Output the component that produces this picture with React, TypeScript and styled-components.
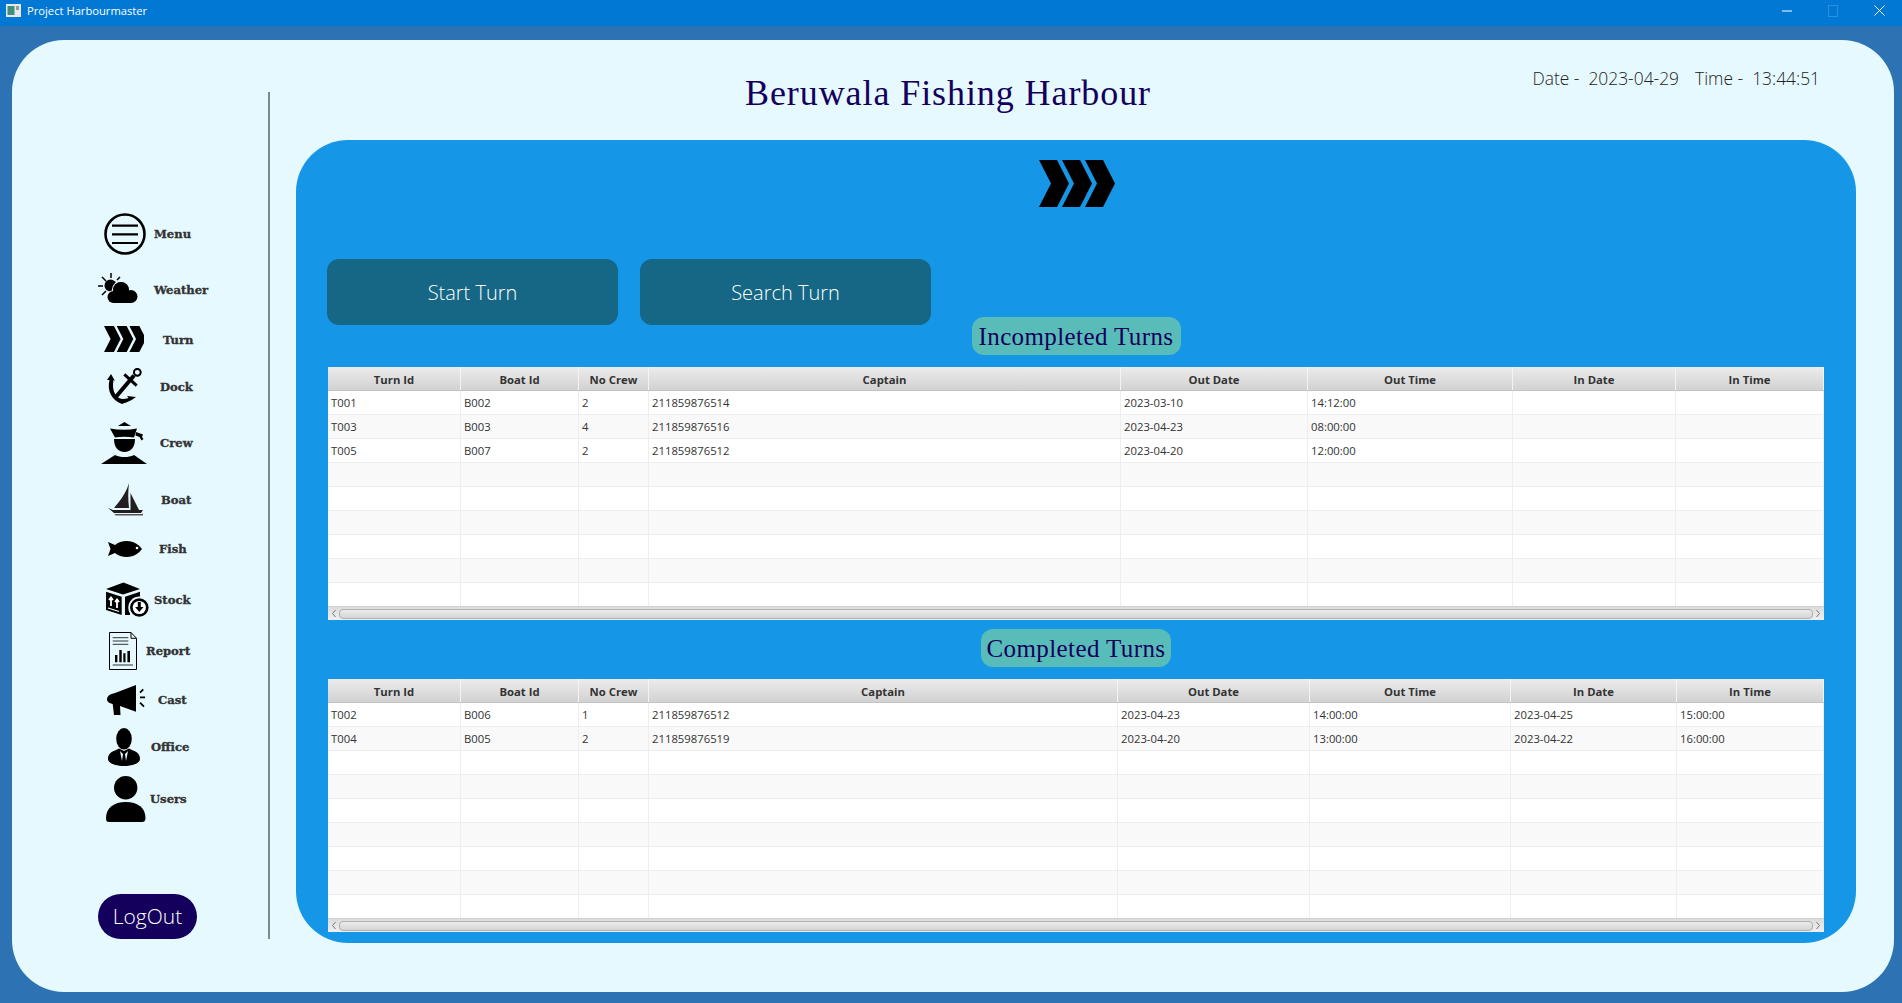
import React, { FC } from 'react';
import styled, { createGlobalStyle } from 'styled-components';

const GlobalStyle = createGlobalStyle`
  html, body {
    margin: 0;
    padding: 0;
    overflow: hidden;
    background: #2d72b2;
  }
  * {
    box-sizing: border-box;
  }
`;

const Window = styled.div`
  width: 1902px;
  height: 1003px;
  display: flex;
  flex-direction: column;
  background: #2d72b2;
  font-family: 'Open Sans', 'Liberation Sans', sans-serif;
`;

const TitleBar = styled.div`
  height: 26px;
  flex: none;
  display: flex;
  align-items: center;
  padding: 0 0 5px 6px;
  background: #0078d4;
  color: #fff;
  font-size: 11.2px;
`;

const AppIcon = styled.svg`
  width: 15px;
  height: 13px;
  margin-right: 6px;
`;

const WindowButtons = styled.div`
  margin-left: auto;
  display: flex;
`;

const WindowButton = styled.div`
  width: 46px;
  height: 20px;
  display: flex;
  align-items: center;
  justify-content: center;
`;

const Card = styled.div`
  flex: 1;
  margin: 14px 8px 11px 12px;
  display: flex;
  background: #e6f9ff;
  border-radius: 52px;
`;

const Sidebar = styled.aside`
  width: 258px;
  flex: none;
  height: 847px;
  margin: 52px 1px 0 0;
  padding-top: 121px;
  display: flex;
  flex-direction: column;
  border-right: 2px solid #7d8a8a;
`;

const NavItem = styled.div<{ $top: number; $left: number; $gap: number }>`
  display: flex;
  align-items: center;
  margin-top: ${(p) => p.$top}px;
  padding-left: ${(p) => p.$left}px;
  gap: ${(p) => p.$gap}px;
`;

const NavLabel = styled.span<{ $drop: number }>`
  padding-top: ${(p) => p.$drop}px;
  font-family: 'DejaVu Serif', 'Liberation Serif', serif;
  font-weight: 700;
  font-size: 11.6px;
  color: #333;
  -webkit-text-stroke: 0.35px #333;
`;

const LogOut = styled.button`
  margin: auto 0 0 86px;
  width: 99px;
  height: 45px;
  padding: 0 0 2px;
  border: none;
  border-radius: 23px;
  background: #14005c;
  color: #fff;
  font-family: 'Open Sans', sans-serif;
  font-weight: 300;
  font-size: 21px;
`;

const Main = styled.main`
  flex: 1;
  min-width: 0;
  padding: 0 38px 0 25px;
`;

const Header = styled.header`
  height: 100px;
  display: flex;
  justify-content: space-between;
`;

const Title = styled.h1`
  margin: 30px 0 0 449px;
  font-family: 'Liberation Serif', serif;
  font-weight: 400;
  font-size: 36px;
  line-height: 46px;
  letter-spacing: 0.92px;
  color: #14005c;
`;

const Clock = styled.div`
  margin: 26px 36px 0 0;
  display: flex;
  gap: 16px;
  font-weight: 300;
  font-size: 17.4px;
  line-height: 24px;
  color: #222;
`;

const Panel = styled.section`
  height: 803px;
  padding-top: 20px;
  display: flex;
  flex-direction: column;
  align-items: center;
  background: #1696e6;
  border-radius: 52px;
`;

const Chevrons = styled.svg`
  width: 77px;
  height: 47px;
  flex: none;
  margin-left: 3px;
`;

const ActionRow = styled.div`
  align-self: stretch;
  height: 66px;
  margin-top: 52px;
  padding-left: 31px;
  display: flex;
  gap: 22px;
`;

const ActionButton = styled.button`
  width: 291px;
  height: 66px;
  padding: 0;
  border: none;
  border-radius: 12px;
  background: #156785;
  color: #fff;
  font-family: 'Open Sans', sans-serif;
  font-weight: 300;
  font-size: 20px;
`;

const SectionLabel = styled.div<{ $width: number; $top: number }>`
  width: ${(p) => p.$width}px;
  height: 38px;
  margin-top: ${(p) => p.$top}px;
  padding-top: 1px;
  display: flex;
  align-items: center;
  justify-content: center;
  border-radius: 12px;
  background: #58bdb9;
  font-family: 'Liberation Serif', serif;
  font-size: 25px;
  letter-spacing: 0.4px;
  color: #14005c;
`;

const TableBox = styled.div`
  width: 1496px;
  height: 253px;
  margin-top: 12px;
  flex: none;
  background: #fff;
`;

const HeadRow = styled.div<{ $cols: string }>`
  height: 24px;
  display: grid;
  grid-template-columns: ${(p) => p.$cols};
  background: linear-gradient(#ececec, #d2d2d2);
  border-bottom: 1px solid #c4c4c4;
`;

const HeadCell = styled.div`
  padding-top: 1px;
  display: flex;
  align-items: center;
  justify-content: center;
  border-right: 1px solid #f4f4f4;
  font-size: 11.3px;
  font-weight: 700;
  color: #333;
`;

const Rows = styled.div`
  height: 215px;
  overflow: hidden;
`;

const Row = styled.div<{ $cols: string; $odd: boolean }>`
  height: 24px;
  display: grid;
  grid-template-columns: ${(p) => p.$cols};
  background: ${(p) => (p.$odd ? '#f9f9f9' : '#fff')};
  border-bottom: 1px solid #eee;
`;

const Cell = styled.div`
  padding: 0 3px;
  display: flex;
  align-items: center;
  border-right: 1px solid #eee;
  font-size: 11.3px;
  color: #333;
`;

const ScrollBar = styled.div`
  height: 14px;
  display: flex;
  align-items: flex-end;
  padding: 0 3px 1px;
  gap: 2px;
  background: linear-gradient(#dcdcdc, #f0f0f0);
  border-top: 1px solid #d0d0d0;
`;

const ScrollArrow = styled.svg`
  width: 6px;
  height: 9px;
  flex: none;
  margin-bottom: 1px;
`;

const ScrollThumb = styled.div`
  flex: 1;
  height: 10px;
  border: 1px solid #b0b0b0;
  border-radius: 4px;
  background: linear-gradient(#ececec, #d4d4d4);
`;

const chevron = (x: number, h: number) => {
  const u = h / 47;
  const p = (a: number, b: number) => `${x + a * u},${b * u}`;
  return [p(0, 0), p(18, 0), p(30, 23.5), p(18, 47), p(0, 47), p(12, 23.5)].join(' ');
};

const ICONS: Record<string, React.ReactNode> = {
  Menu: (
    <g>
      <circle cx="21" cy="21" r="19.5" fill="none" stroke="#000" strokeWidth="2.6" />
      <path d="M8 12.7h26M8 21.3h26M8 30h26" stroke="#000" strokeWidth="2.2" />
    </g>
  ),
  Weather: (
    <g>
      <circle cx="12.5" cy="12.5" r="6" />
      <path d="M13 0v5M0 13h5M4 4l4 4M22 4l-3 3M4 22l4-4" stroke="#000" strokeWidth="1.5" fill="none" />
      <g stroke="#e6f9ff" strokeWidth="1.4">
        <circle cx="23" cy="17" r="8.5" />
        <circle cx="15.5" cy="24" r="6" />
      </g>
      <circle cx="23" cy="17" r="8" />
      <circle cx="15.5" cy="24" r="6" />
      <circle cx="33" cy="23.500" r="6.500" />
      <path d="M15 20h18v10H15z" />
    </g>
  ),
  Turn: (
    <g>
      <polygon points={chevron(0, 26)} />
      <polygon points={chevron(12.7, 26)} />
      <polygon points={chevron(25.4, 26)} />
    </g>
  ),
  Dock: (
    <g>
      <circle cx="30.3" cy="4.3" r="3.4" fill="none" stroke="#000" strokeWidth="2" />
      <path d="M27 7.500L8 30" stroke="#000" strokeWidth="4" />
      <path d="M17.3 6.300L29.700 17.700" stroke="#000" strokeWidth="3" />
      <path d="M4 6L0 12l2.500 0C0 22 4 32 15 36c5-2 9-3 14-7l-9-1 1.500 2c-3.500 1-6.500 1.500-9.500 0C7 27 5 20 6.500 12L8 13z" />
    </g>
  ),
  Crew: (
    <g>
      <path d="M23.300 0L30 4H17z" />
      <path d="M9 6.500Q23 9 36 6.500L33 15.500Q23 14 14 15.500z" />
      <path d="M35 10l7 2.500-1 2.500 1.500 2-2 1.500-2-3.500-4-1.500z" />
      <path d="M13 17h21c0 8-4 13-10.500 13S13 25 13 17z" />
      <path d="M0 42l14-9c3 1.500 6 2 9.500 2s6.500-.5 9.500-2l13 9z" />
    </g>
  ),
  Boat: (
    <g>
      <path d="M21 0c-1 8-1 17 0 25H6c6-7 12-15 15-25z" fill="#231f20" />
      <path d="M22.500 10L31 27H22.500z" fill="#231f20" />
      <path d="M0 25l5 2h30l-2 3H6z" fill="#231f20" />
      <path d="M6 31h28l1-.5v2H8z" fill="#555" />
    </g>
  ),
  Fish: (
    <g>
      <path d="M0 1l7 3c3-2.500 7-4 12-4 7 0 12 4 15 8-3 4-8 8-15 8-5 0-9-1.500-12-4l-7 3 2.500-7z" />
      <circle cx="29" cy="7" r="1.300" fill="#fff" />
    </g>
  ),
  Stock: (
    <g>
      <path d="M1 7L18.500 .5 35 7l-17 5.500z" />
      <path d="M1 9.700l15.700 5V33L1 28z" />
      <path d="M20 14.700l15-5V24H25v9l-5 0z" />
      <path d="M6 24v-8M4 18l2-2.500L8 18M12 26v-8M10 20l2-2.500 2 2.500" stroke="#fff" strokeWidth="1.800" fill="none" />
      <path d="M3 26l11 3.500" stroke="#fff" strokeWidth="1.200" />
      <circle cx="34.300" cy="25.500" r="11" fill="#e6f9ff" />
      <circle cx="34.300" cy="25.500" r="9.300" />
      <circle cx="34.300" cy="25.500" r="6.600" fill="#fff" />
      <path d="M32.800 20h3v5h2.700l-4.200 5-4.200-5h2.700z" />
    </g>
  ),
  Report: (
    <g>
      <path d="M.5.5H22l5.500 5.800V37.500H.5z" fill="none" stroke="#000" />
      <path d="M22 .5v5.800h5.500" fill="none" stroke="#000" />
      <path d="M3.700 5.700h15.600M3.700 9h15.600M3.700 12.300h15.600M3.700 33H24" stroke="#000" strokeWidth="0.800" />
      <path d="M6 23h2.400v7.300H6zM10.300 18h2.400v12.300h-2.400zM14.300 21.300h2.200v9h-2.200zM18.400 19H21v11.300h-2.600z" />
    </g>
  ),
  Cast: (
    <g>
      <path d="M29 0v26.700L13 21l.5 9H7L5.700 19C2 18 0 16.500 0 14.500 0 11 3 9 8 8z" />
      <path d="M33 7.700l3.300-3.400M33 12.300h5M33 17.700l4 4" stroke="#000" strokeWidth="1.700" fill="none" />
    </g>
  ),
  Office: (
    <g>
      <ellipse cx="16" cy="10.800" rx="7.800" ry="10.800" />
      <path d="M0 31c0-5 3-7 7-8.500l4-2 5 2.500 5-2.500 4 2c4 1.500 7 3.500 7 8.500 0 4-7 7-16 7S0 35 0 31z" />
      <path d="M12 23l3 3-1 7zM20 23l-3 3 1 7z" fill="#e6f9ff" />
    </g>
  ),
  Users: (
    <g>
      <circle cx="19.700" cy="11.700" r="11.700" />
      <path d="M0 42c0-10 8-16 19.700-16C32 26 39.500 32 39.500 42c0 3-1.500 4-3.500 4H3c-2 0-3-1-3-4z" />
    </g>
  ),
};

const NAV = [
  { name: 'Menu', w: 42, h: 42, top: 0, left: 92, labelX: 154, drop: 0 },
  { name: 'Weather', w: 40, h: 30, top: 18, left: 86, labelX: 154, drop: 4 },
  { name: 'Turn', w: 40, h: 26, top: 23, left: 92, labelX: 163, drop: 1 },
  { name: 'Dock', w: 35, h: 36, top: 16, left: 95, labelX: 160, drop: 2 },
  { name: 'Crew', w: 46, h: 42, top: 18, left: 89, labelX: 160, drop: 0 },
  { name: 'Boat', w: 35, h: 33, top: 19, left: 96, labelX: 161, drop: 0 },
  { name: 'Fish', w: 34, h: 16, top: 25, left: 96, labelX: 159, drop: 0 },
  { name: 'Stock', w: 44, h: 35, top: 25, left: 93, labelX: 154, drop: 0 },
  { name: 'Report', w: 28, h: 38, top: 15, left: 97, labelX: 146, drop: 0 },
  { name: 'Cast', w: 38, h: 30, top: 15, left: 95, labelX: 158, drop: 0 },
  { name: 'Office', w: 32, h: 38, top: 13, left: 96, labelX: 151, drop: 0 },
  { name: 'Users', w: 40, h: 46, top: 10, left: 94, labelX: 150, drop: 0 },
];

const HEADERS = ['Turn Id', 'Boat Id', 'No Crew', 'Captain', 'Out Date', 'Out Time', 'In Date', 'In Time'];

const INCOMPLETE = [
  ['T001', 'B002', '2', '211859876514', '2023-03-10', '14:12:00', '', ''],
  ['T003', 'B003', '4', '211859876516', '2023-04-23', '08:00:00', '', ''],
  ['T005', 'B007', '2', '211859876512', '2023-04-20', '12:00:00', '', ''],
];

const COMPLETE = [
  ['T002', 'B006', '1', '211859876512', '2023-04-23', '14:00:00', '2023-04-25', '15:00:00'],
  ['T004', 'B005', '2', '211859876519', '2023-04-20', '13:00:00', '2023-04-22', '16:00:00'],
];

const TurnTable: FC<{ cols: string; data: string[][] }> = ({ cols, data }) => {
  const rows = Array.from({ length: 9 }, (_, i) => data[i] || HEADERS.map(() => ''));
  return (
    <TableBox>
      <HeadRow $cols={cols}>
        {HEADERS.map((h) => (
          <HeadCell key={h}>{h}</HeadCell>
        ))}
      </HeadRow>
      <Rows>
        {rows.map((r, i) => (
          <Row key={i} $cols={cols} $odd={i % 2 === 1}>
            {r.map((c, j) => (
              <Cell key={j}>{c}</Cell>
            ))}
          </Row>
        ))}
      </Rows>
      <ScrollBar>
        <ScrollArrow viewBox="0 0 6 9">
          <path d="M4.500 1L1.500 4.500 4.500 8" fill="none" stroke="#777" />
        </ScrollArrow>
        <ScrollThumb />
        <ScrollArrow viewBox="0 0 6 9">
          <path d="M1.500 1L4.500 4.500 1.500 8" fill="none" stroke="#777" />
        </ScrollArrow>
      </ScrollBar>
    </TableBox>
  );
};

const App: FC = () => (
  <Window>
    <GlobalStyle />
    <TitleBar>
      <AppIcon viewBox="0 0 15 13">
        <rect width="15" height="13" fill="#e8e8e8" />
        <rect x="1.500" y="2" width="7" height="9" fill="#3f8f7f" />
        <rect x="10" y="2" width="3" height="4" fill="#9a9a9a" />
      </AppIcon>
      Project Harbourmaster
      <WindowButtons>
        <WindowButton>
          <svg width="10" height="2" viewBox="0 0 10 2">
            <path d="M0 1h10" stroke="#fff" />
          </svg>
        </WindowButton>
        <WindowButton>
          <svg width="10" height="12" viewBox="0 0 10 12">
            <rect x="0.500" y="0.500" width="9" height="11" fill="none" stroke="#2f8fdc" />
          </svg>
        </WindowButton>
        <WindowButton>
          <svg width="11" height="11" viewBox="0 0 11 11">
            <path d="M.5.500l10 10M10.500.500l-10 10" stroke="#fff" />
          </svg>
        </WindowButton>
      </WindowButtons>
    </TitleBar>
    <Card>
      <Sidebar>
        {NAV.map((n) => (
          <NavItem key={n.name} $top={n.top} $left={n.left} $gap={n.labelX - 12 - n.left - n.w}>
            <svg width={n.w} height={n.h} viewBox={`0 0 ${n.w} ${n.h}`}>
              {ICONS[n.name]}
            </svg>
            <NavLabel $drop={n.drop}>{n.name}</NavLabel>
          </NavItem>
        ))}
        <LogOut>LogOut</LogOut>
      </Sidebar>
      <Main>
        <Header>
          <Title>Beruwala Fishing Harbour</Title>
          <Clock>
            <span>Date - &nbsp;2023-04-29</span>
            <span>Time - &nbsp;13:44:51</span>
          </Clock>
        </Header>
        <Panel>
          <Chevrons viewBox="0 0 77 47">
            <polygon points={chevron(0, 47)} />
            <polygon points={chevron(23, 47)} />
            <polygon points={chevron(46, 47)} />
          </Chevrons>
          <ActionRow>
            <ActionButton>Start Turn</ActionButton>
            <ActionButton>Search Turn</ActionButton>
          </ActionRow>
          <SectionLabel $width={209} $top={-8}>
            Incompleted Turns
          </SectionLabel>
          <TurnTable cols="133px 118px 70px 472px 187px 205px 163px 148px" data={INCOMPLETE} />
          <SectionLabel $width={190} $top={9}>
            Completed Turns
          </SectionLabel>
          <TurnTable cols="133px 118px 70px 469px 192px 201px 166px 147px" data={COMPLETE} />
        </Panel>
      </Main>
    </Card>
  </Window>
);

export default App;
